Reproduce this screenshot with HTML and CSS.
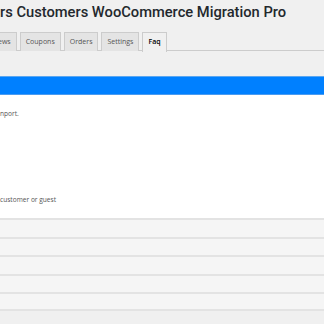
FILE: index.html
```html
<!DOCTYPE html>
<html lang="en">

<head>
    <meta charset="UTF-8">
    <meta name="viewport" content="width=device-width, initial-scale=1.0">
    <title>Customers WooCommerce Migration Pro - Faq</title>
    <link rel="stylesheet" href="styles.css">
</head>

<body>
    <div class="wrap">
        <h1 class="page-title">rs Customers WooCommerce Migration Pro</h1>

        <nav class="nav-tabs">
            <a href="#" class="nav-tab">ews</a>
            <a href="#" class="nav-tab">Coupons</a>
            <a href="#" class="nav-tab">Orders</a>
            <a href="#" class="nav-tab">Settings</a>
            <a href="#" class="nav-tab nav-tab-active">Faq</a>
        </nav>

        <div class="faq">
            <div class="faq-head faq-head-open"></div>
            <div class="faq-body">
                <p class="faq-line-first">nport.</p>
                <p class="faq-line-last">customer or guest</p>
            </div>
            <div class="faq-head"></div>
            <div class="faq-head"></div>
            <div class="faq-head"></div>
            <div class="faq-head"></div>
            <div class="faq-head"></div>
        </div>
    </div>
</body>

</html>
```

FILE: styles.css
```css
:root {
    --color-background: #f0f0f0;
    --color-tab: #e4e4e4;
    --color-border: #cccccc;
    --color-blue: #0080ff;
    --color-row: #f5f5f5;
    --color-text: #555555;
}

* {
    margin: 0;
    padding: 0;
    box-sizing: border-box;
}

body {
    background-color: var(--color-background);
    font-family: 'Open Sans', 'Liberation Sans', sans-serif;
    color: #23282d;
    overflow: hidden;
}

.wrap {
    width: 100%;
}

.page-title {
    font-family: Roboto, 'Open Sans', sans-serif;
    font-size: 14.7px;
    font-weight: 500;
    line-height: 24px;
    color: #23282d;
    white-space: nowrap;
}

.nav-tabs {
    display: flex;
    gap: 3px;
    margin-top: 8px;
    margin-left: -8px;
    border-bottom: 1px solid var(--color-border);
    height: 19px;
}

.nav-tab {
    display: block;
    height: 19px;
    padding: 0 5px;
    font-size: 7px;
    font-weight: 400;
    line-height: 18px;
    color: var(--color-text);
    background-color: var(--color-tab);
    border: 1px solid var(--color-border);
    border-bottom: none;
    text-decoration: none;
}

.nav-tab-active {
    background-color: var(--color-background);
    color: #000;
    font-weight: 600;
    height: 20px;
}

.faq {
    margin-top: 25px;
}

.faq-head {
    height: 18.6px;
    background-color: var(--color-row);
    border-top: 2px solid #e3e3e3;
}

.faq-head-open {
    height: 19px;
    background-color: var(--color-blue);
    border-top: 1px solid #5aa6f0;
    border-bottom: 1px solid #4a9bf0;
}

.faq-body {
    background-color: #fff;
    height: 123px;
    padding-top: 14px;
    font-size: 6.6px;
    color: var(--color-text);
}

.faq-line-last {
    margin-top: 77px;
}

.faq-body + .faq-head ~ .faq-head:last-child {
    border-bottom: 2px solid #e3e3e3;
}
```
